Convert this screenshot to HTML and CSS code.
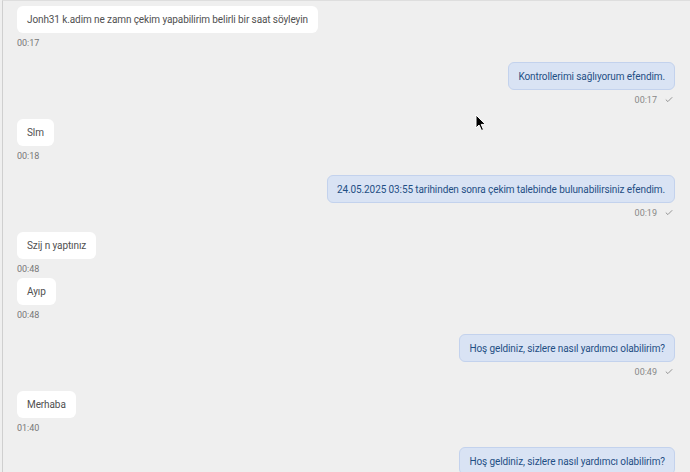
FILE: index.html
```html
<!DOCTYPE html>
<html lang="tr">
<head>
    <meta charset="UTF-8">
    <meta name="viewport" content="width=device-width, initial-scale=1.0">
    <title>Sohbet</title>
    <link rel="stylesheet" href="styles.css">
</head>
<body>
    <div class="chat">
        <div class="msg in">
            <div class="bubble">Jonh31 k.adim ne zamn çekim yapabilirim belirli bir saat söyleyin</div>
            <div class="meta"><span class="time">00:17</span></div>
        </div>
        <div class="msg out">
            <div class="bubble">Kontrollerimi sağlıyorum efendim.</div>
            <div class="meta"><span class="time">00:17</span><svg class="tick" viewBox="0 0 10 8"><path d="M1 4.2 L3.6 6.6 L9 1.2" /></svg></div>
        </div>
        <div class="msg in">
            <div class="bubble">Slm</div>
            <div class="meta"><span class="time">00:18</span></div>
        </div>
        <div class="msg out">
            <div class="bubble">24.05.2025 03:55 tarihinden sonra çekim talebinde bulunabilirsiniz efendim.</div>
            <div class="meta"><span class="time">00:19</span><svg class="tick" viewBox="0 0 10 8"><path d="M1 4.2 L3.6 6.6 L9 1.2" /></svg></div>
        </div>
        <div class="msg in">
            <div class="bubble">Szij n yaptınız</div>
            <div class="meta"><span class="time">00:48</span></div>
        </div>
        <div class="msg in">
            <div class="bubble">Ayıp</div>
            <div class="meta"><span class="time">00:48</span></div>
        </div>
        <div class="msg out">
            <div class="bubble">Hoş geldiniz, sizlere nasıl yardımcı olabilirim?</div>
            <div class="meta"><span class="time">00:49</span><svg class="tick" viewBox="0 0 10 8"><path d="M1 4.2 L3.6 6.6 L9 1.2" /></svg></div>
        </div>
        <div class="msg in">
            <div class="bubble">Merhaba</div>
            <div class="meta"><span class="time">01:40</span></div>
        </div>
        <div class="msg out">
            <div class="bubble">Hoş geldiniz, sizlere nasıl yardımcı olabilirim?</div>
            <div class="meta"><span class="time">01:40</span><svg class="tick" viewBox="0 0 10 8"><path d="M1 4.2 L3.6 6.6 L9 1.2" /></svg></div>
        </div>

        <!-- mouse pointer captured in the screenshot -->
        <svg class="pointer" viewBox="0 0 12 18"><path d="M1 1 L1 14 L4 11 L6.5 16.5 L8.5 15.6 L6.2 10.4 L10.5 10.4 Z" /></svg>
    </div>
</body>
</html>
```

FILE: styles.css
```css
body {
    margin: 0;
    font-family: Roboto, "Liberation Sans", Arial, sans-serif;
    background: #efefef;
    height: 472px;
    overflow: hidden;
}

.chat {
    position: relative;
    margin-left: 2px;
    border-left: 1px solid #cfcfcf;
    border-top: 1px solid #dedede;
    padding: 5px 15px 0 14px;
    display: flex;
    flex-direction: column;
    gap: 4px;
    min-height: 100vh;
    box-sizing: border-box;
}

.msg {
    display: flex;
    flex-direction: column;
    align-items: flex-start;
}

.msg.out {
    align-items: flex-end;
}

.msg.in + .msg.out,
.msg.out + .msg.in {
    margin-top: 10px;
}

.bubble {
    font-size: 10px;
    letter-spacing: -0.1px;
    line-height: 15px;
    padding: 6px 10px;
    border-radius: 6px;
    background: #fff;
    color: #505050;
}

.msg.out .bubble {
    background: #d9e3f4;
    border: 1px solid #c3d2ed;
    color: #1f4f84;
    padding: 5.5px 9px;
}

.meta {
    display: flex;
    align-items: center;
    margin-top: 4px;
    height: 11px;
    font-size: 9px;
    color: #777;
}

.msg.out .meta {
    gap: 8px;
    padding-right: 2px;
    color: #888;
}

.tick {
    width: 8px;
    height: 7px;
    fill: none;
    stroke: #888;
    stroke-width: 1.1;
}

.pointer {
    position: absolute;
    left: 472px;
    top: 113px;
    width: 12px;
    height: 18px;
    fill: #000;
    stroke: #fff;
    stroke-width: 1;
}
```
